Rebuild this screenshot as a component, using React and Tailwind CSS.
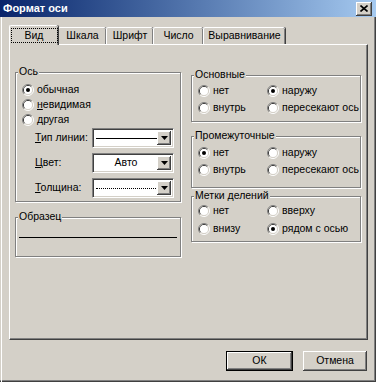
import React from "react";

const face = "bg-[#d4d0c8]";
const raised =
  "shadow-[inset_-1px_-1px_0_#404040,inset_1px_1px_0_#fff,inset_-2px_-2px_0_#808080]";
const sunken =
  "border border-t-[#808080] border-l-[#808080] border-r-white border-b-white shadow-[inset_1px_1px_0_#404040,inset_-1px_-1px_0_#d4d0c8]";

function Radio({ checked }) {
  return (
    <svg width="12" height="12" viewBox="0 0 12 12" className="shrink-0">
      <path d="M2.11 9.89 A5.5 5.5 0 0 1 9.89 2.11" fill="none" stroke="#808080" />
      <path d="M9.89 2.11 A5.5 5.5 0 0 1 2.11 9.89" fill="none" stroke="#fff" />
      <path d="M2.82 9.18 A4.5 4.5 0 0 1 9.18 2.82" fill="none" stroke="#404040" />
      <path d="M9.18 2.82 A4.5 4.5 0 0 1 2.82 9.18" fill="none" stroke="#d4d0c8" />
      <circle cx="6" cy="6" r="4" fill="#fff" />
      {checked && <circle cx="6" cy="6" r="2" fill="#000" />}
    </svg>
  );
}

function Option({ label, checked, u }) {
  return (
    <div className="flex items-center gap-[3px] h-full whitespace-nowrap">
      <Radio checked={checked} />
      <span>
        {u ? (
          <>
            <span className="underline">{label[0]}</span>
            {label.slice(1)}
          </>
        ) : (
          label
        )}
      </span>
    </div>
  );
}

function Group({ title, className, children }) {
  return (
    <div
      className={`relative border border-[#808080] shadow-[inset_1px_1px_0_#fff,1px_1px_0_#fff] ${className}`}
    >
      <span className={`absolute -top-[8px] left-[2px] px-px leading-[13px] whitespace-nowrap ${face}`}>
        {title}
      </span>
      {children}
    </div>
  );
}

function Combo({ children }) {
  return (
    <div className={`w-[82px] h-[20px] bg-white flex items-stretch p-[2px] ${sunken}`}>
      <div className="flex-1 flex items-center justify-center">{children}</div>
      <div className={`w-[14px] flex items-center justify-center ${face} ${raised}`}>
        <svg width="7" height="4" viewBox="0 0 7 4">
          <path d="M0 0h7L3.5 4z" fill="#000" />
        </svg>
      </div>
    </div>
  );
}

function Tab({ label, selected, w }) {
  return (
    <div
      className={`${w} flex items-center justify-center rounded-t-[2px] border-l border-t border-white shadow-[inset_-1px_0_0_#808080,1px_0_0_#404040] whitespace-nowrap ${face} ${
        selected ? "h-[20px] -mb-px relative z-10" : "h-[17px]"
      }`}
    >
      {selected ? (
        <span className="px-[13px] leading-[13px] outline-1 outline-dotted outline-black">
          {label}
        </span>
      ) : (
        label
      )}
    </div>
  );
}

const rows = [
  ["Тип линии:", <div className="w-[61px] h-px bg-black" />],
  ["Цвет:", "Авто"],
  ["Толщина:", <div className="w-[60px] border-t border-dotted border-black" />],
];

export default function App() {
  return (
    <div
      className={`w-[376px] h-[382px] ${face} flex flex-col text-[10.5px] text-black shadow-[inset_-1px_-1px_0_#404040,inset_-2px_-2px_0_#808080]`}
      style={{ fontFamily: '"Liberation Sans", Arial, sans-serif' }}
    >
      {/* Title bar */}
      <div className="h-[17px] flex items-center justify-between pl-[3px] pr-[4px] bg-linear-to-r from-[#0a246a] to-[#a6caf0]">
        <span className="text-white font-bold text-[11px]">Формат оси</span>
        <div className={`w-[16px] h-[14px] flex items-center justify-center ${face} ${raised}`}>
          <svg width="8" height="7" viewBox="0 0 8 7">
            <path d="M0.5 0.5L7.5 6.5M7.5 0.5L0.5 6.5" stroke="#000" strokeWidth="1.6" />
          </svg>
        </div>
      </div>

      {/* Body */}
      <div className="flex-1 flex flex-col ml-px border-l border-white pl-[7px]">
        {/* Tabs */}
        <div className="flex items-end h-[19px] mt-[8px]">
          <Tab label="Вид" selected w="w-[49px]" />
          <Tab label="Шкала" w="w-[48px]" />
          <Tab label="Шрифт" w="w-[47px]" />
          <Tab label="Число" w="w-[50px]" />
          <Tab label="Выравнивание" w="w-[82px]" />
        </div>

        {/* Panel */}
        <div className="w-[359px] h-[296px] border-l border-t border-white border-r border-b border-r-[#404040] border-b-[#404040] shadow-[inset_-1px_-1px_0_#808080] flex">
          {/* Left column */}
          <div className="ml-[5px] mt-[27px] w-[166px] flex flex-col">
            <Group title="Ось" className="h-[130px] pt-[9px] pl-[6px]">
              <div className="h-[15px]">
                <Option label="обычная" checked />
              </div>
              <div className="h-[15px]">
                <Option label="невидимая" u />
              </div>
              <div className="h-[15px]">
                <Option label="другая" u />
              </div>
              <div className="flex flex-col gap-[5px] mt-[1px]">
                {rows.map(([l, c], i) => (
                  <div key={i} className="flex items-center h-[20px]">
                    <span className="w-[70px] pl-[13px] whitespace-nowrap">
                      <span className="underline">{l[0]}</span>
                      {l.slice(1)}
                    </span>
                    <Combo>{c}</Combo>
                  </div>
                ))}
              </div>
            </Group>

            <Group title="Образец" className="h-[40px] mt-[15px] pt-[19px] px-[3px]">
              <div className="h-px bg-black" />
            </Group>
          </div>

          {/* Right column */}
          <div className="ml-[10px] mt-[30px] w-[170px] flex flex-col">
            <Group title="Основные" className="h-[47px] pt-[6px] pl-[6px]">
              <div className="grid grid-cols-[69px_1fr] auto-rows-[17px]">
                <Option label="нет" />
                <Option label="наружу" checked />
                <Option label="внутрь" />
                <Option label="пересекают ось" />
              </div>
            </Group>
            <Group title="Промежуточные" className="h-[52px] mt-[14px] pt-[7px] pl-[6px]">
              <div className="grid grid-cols-[69px_1fr] auto-rows-[17px]">
                <Option label="нет" checked />
                <Option label="наружу" />
                <Option label="внутрь" />
                <Option label="пересекают ось" />
              </div>
            </Group>
            <Group title="Метки делений" className="h-[46px] mt-[8px] pt-[5px] pl-[6px]">
              <div className="grid grid-cols-[69px_1fr] auto-rows-[18px]">
                <Option label="нет" />
                <Option label="вверху" />
                <Option label="внизу" />
                <Option label="рядом с осью" checked />
              </div>
            </Group>
          </div>
        </div>

        {/* Buttons */}
        <div className="flex gap-[10px] mt-[11px] ml-[217px]">
          <div className="w-[67px] h-[20px] border border-black">
            <div className={`w-full h-full flex items-center justify-center ${raised}`}>
              ОК
            </div>
          </div>
          <div className={`w-[64px] h-[20px] flex items-center justify-center ${raised}`}>
            Отмена
          </div>
        </div>
      </div>
    </div>
  );
}
